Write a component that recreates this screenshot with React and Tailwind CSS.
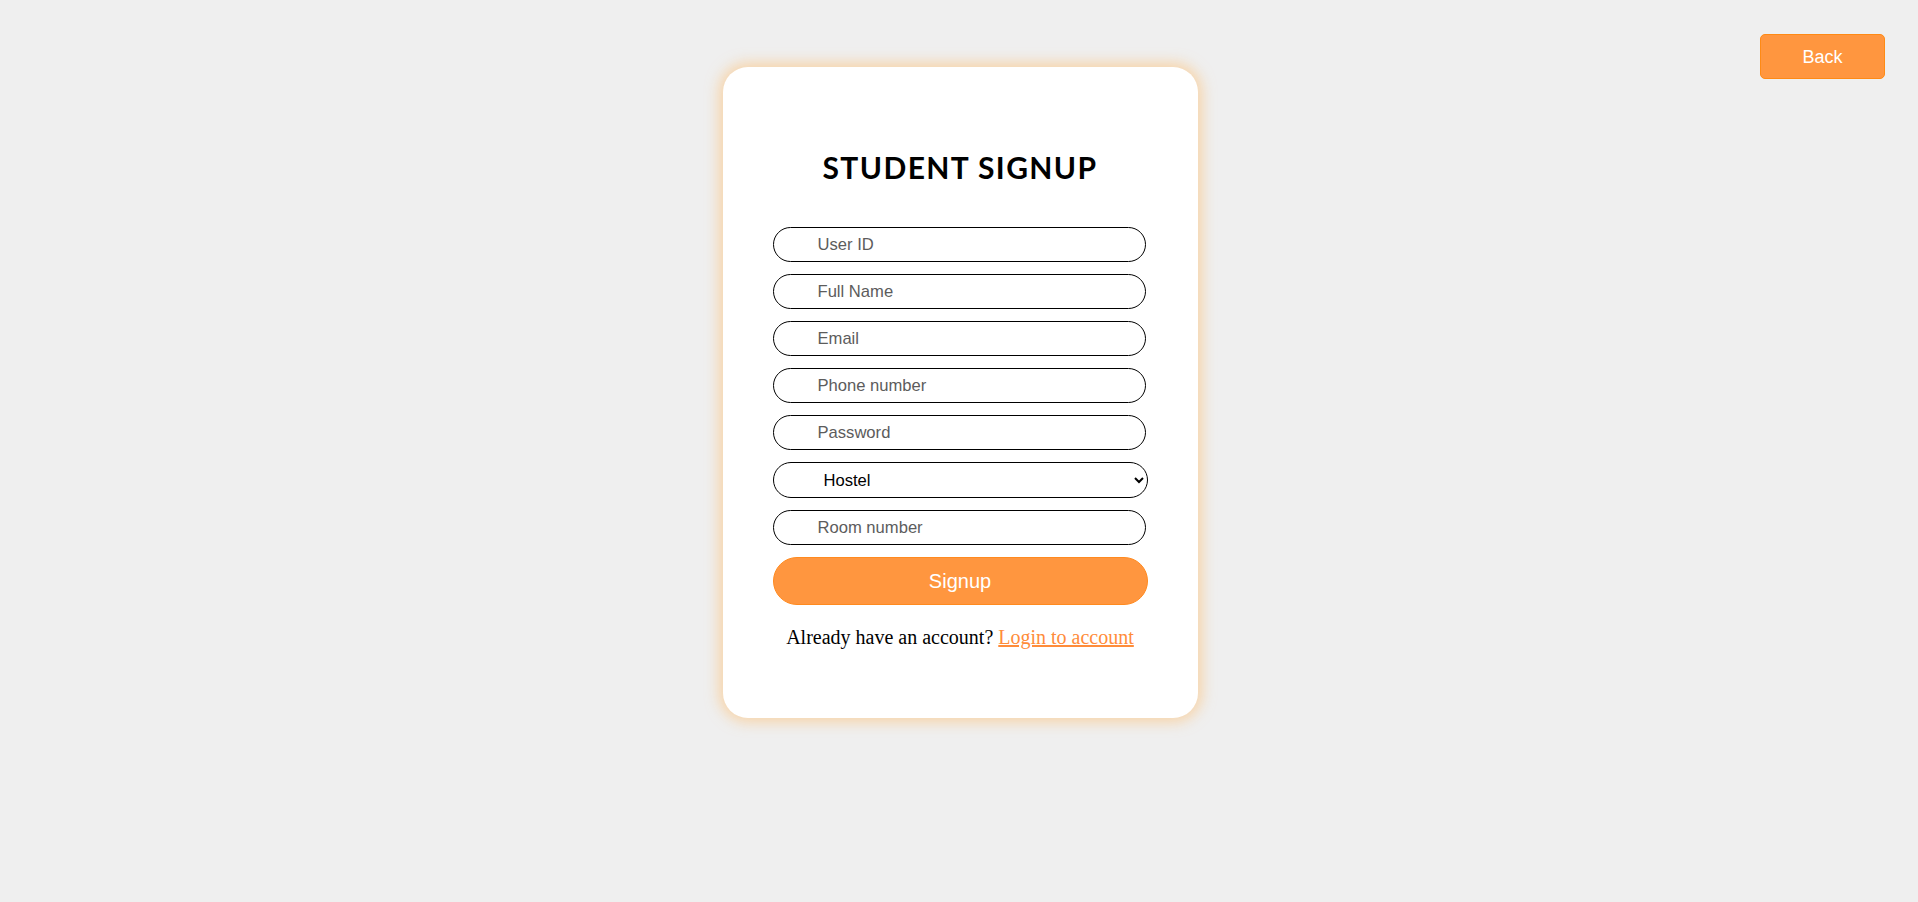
import React, { useState } from 'react';

export default function App() {
  const [hostel, setHostel] = useState('');

  const fields = ['User ID', 'Full Name', 'Email', 'Phone number', 'Password'];

  return (
    <div className="relative min-h-screen bg-[#efefef] flex justify-center pt-[67px] pb-10">
      {/* Back button */}
      <button className="absolute top-[34px] right-[33px] w-[125px] h-[45px] pt-[1px] rounded-[5px] bg-[#ff963f] border border-[#ff8a14] text-white text-[18px] font-['Liberation_Sans',Arial,sans-serif]">
        Back
      </button>

      {/* Card */}
      <div className="ml-[2px] w-[475px] h-[651px] bg-white rounded-[25px] shadow-[0_0_14px_4px_rgba(255,190,110,0.55)] px-[50px] pt-[82px] flex flex-col">
        <h2 className="text-center text-[30px] leading-[36px] font-bold tracking-[1.4px] text-black font-['Lato',sans-serif] mb-[42px]">
          STUDENT SIGNUP
        </h2>

        <form className="flex flex-col gap-3 font-['Liberation_Sans',Arial,sans-serif]">
          {fields.map((f) => (
            <input
              key={f}
              type={f === 'Password' ? 'password' : 'text'}
              placeholder={f}
              className="w-[373px] h-[35px] rounded-full border border-black pl-[44px] text-[16.6px] text-black placeholder:text-[#5c5c5c] outline-none"
            />
          ))}

          <select
            value={hostel}
            onChange={(e) => setHostel(e.target.value)}
            className="w-[375px] h-[36px] rounded-full border border-black pl-[46px] pr-2 text-[16.6px] text-black bg-white outline-none"
          >
            <option value="">Hostel</option>
            <option value="a">Hostel A</option>
            <option value="b">Hostel B</option>
          </select>

          <input
            type="text"
            placeholder="Room number"
            className="w-[373px] h-[35px] rounded-full border border-black pl-[44px] text-[16.6px] text-black placeholder:text-[#5c5c5c] outline-none"
          />

          <button
            type="button"
            className="w-[375px] h-[48px] rounded-full bg-[#ff963f] border border-[#ff8a1f] text-white text-[20px]"
          >
            Signup
          </button>
        </form>

        <p className="mt-[17px] text-center text-[20px] text-black font-['Liberation_Serif','Times_New_Roman',serif]">
          Already have an account?{' '}
          <a href="#" className="text-[#ff8c3a] underline">
            Login to account
          </a>
        </p>
      </div>
    </div>
  );
}
